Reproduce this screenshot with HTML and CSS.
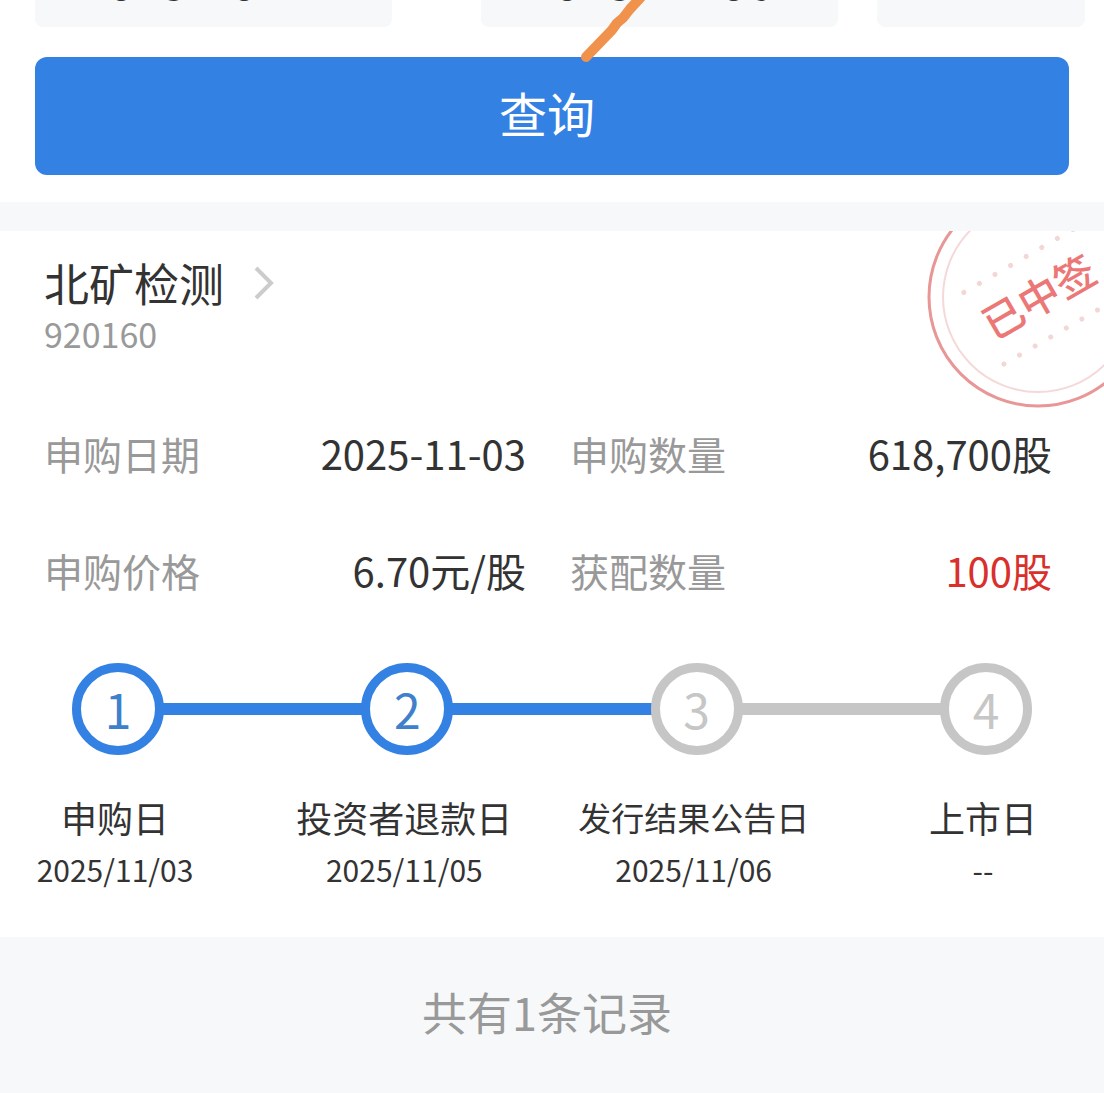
FILE: index.html
```
<!DOCTYPE html>
<html lang="zh-CN">
<head>
    <meta charset="utf-8" />
    <meta name="viewport" content="width=device-width, initial-scale=1" />
    <title>中签查询</title>
    <link rel="stylesheet" href="styles.css">
</head>
<body>

    <!-- 查询条件 -->
    <form class="query-form">
        <div class="query-fields">
            <input class="field" type="text" value="2025-10-12" aria-label="开始日期">
            <input class="field field-end" type="text" value="2025-11-06" aria-label="结束日期">
            <button class="field-more" type="button" aria-label="筛选"></button>
        </div>
        <button class="query-btn" type="button">查询</button>
        <svg class="pen-mark" width="80" height="64" viewBox="0 0 80 64" aria-hidden="true">
            <path d="M10 57 L36 30 L41 23 L47 18 L54 9 L65 -3" />
        </svg>
    </form>

    <!-- 申购记录 -->
    <section class="record-card">
        <svg class="stamp" width="222" height="222" viewBox="0 0 222 222">
            <circle class="stamp-outer" cx="111" cy="111" r="109" />
            <circle class="stamp-inner" cx="111" cy="111" r="95" />
            <g transform="rotate(-30 111 111)">
                <path class="stamp-dots" d="M49 70 H177" />
                <path class="stamp-dots" d="M48 152 H177" />
                <text class="stamp-text" x="112" y="127">已中签</text>
            </g>
        </svg>

        <a class="stock-link" href="#">
            <span class="stock-name">北矿检测</span>
            <svg class="arrow" width="20" height="36" viewBox="0 0 20 36" aria-hidden="true">
                <path d="M2 3 L17 18 L2 33" />
            </svg>
        </a>
        <div class="stock-code">920160</div>

        <dl class="info-grid">
            <div class="info-item">
                <dt>申购日期</dt>
                <dd>2025-11-03</dd>
            </div>
            <div class="info-item">
                <dt>申购数量</dt>
                <dd>618,700股</dd>
            </div>
            <div class="info-item">
                <dt>申购价格</dt>
                <dd>6.70元/股</dd>
            </div>
            <div class="info-item">
                <dt>获配数量</dt>
                <dd class="red">100股</dd>
            </div>
        </dl>

        <!-- 进度 -->
        <div class="steps">
            <div class="step done">
                <span class="step-num">1</span>
                <span class="step-name">申购日</span>
                <span class="step-date">2025/11/03</span>
            </div>
            <span class="step-line done"></span>
            <div class="step done">
                <span class="step-num">2</span>
                <span class="step-name">投资者退款日</span>
                <span class="step-date">2025/11/05</span>
            </div>
            <span class="step-line done"></span>
            <div class="step">
                <span class="step-num">3</span>
                <span class="step-name step-name-long">发行结果公告日</span>
                <span class="step-date">2025/11/06</span>
            </div>
            <span class="step-line"></span>
            <div class="step">
                <span class="step-num">4</span>
                <span class="step-name">上市日</span>
                <span class="step-date">--</span>
            </div>
        </div>
    </section>

    <footer class="total">共有1条记录</footer>

</body>
</html>
```
FILE: styles.css
```
* {
    box-sizing: border-box;
}

body {
    margin: 0;
    background-color: #f6f8fa;
    color: #333333;
    font-family: "Noto Sans CJK SC", sans-serif;
    overflow: hidden;
}

button, input {
    font-family: inherit;
    border: none;
}

/* 查询条件 */
.query-form {
    position: relative;
    margin-top: -67px;
    padding: 0 35px 27px;
    background-color: #ffffff;
}

.query-fields {
    display: flex;
    margin-right: -16px;
    margin-bottom: 30px;
}

.field, .field-more {
    height: 94px;
    border-radius: 8px;
    background-color: #f6f8fa;
}

.field {
    flex: 1;
    min-width: 0;
    padding: 0 0 2px 46px;
    font-size: 48px;
    color: #333333;
}

.field-end {
    margin: 0 39px 0 89px;
}

.field-more {
    width: 208px;
}

.query-btn {
    display: block;
    width: 100%;
    height: 118px;
    padding: 0 10px 8px 0;
    border-radius: 12px;
    background-color: #3381e3;
    color: #ffffff;
    font-size: 48px;
    cursor: pointer;
}

.pen-mark {
    position: absolute;
    top: 67px;
    left: calc(50% + 24px);
    fill: none;
    stroke: #f0924c;
    stroke-width: 10;
    stroke-linecap: round;
    stroke-linejoin: round;
}

/* 申购记录 */
.record-card {
    position: relative;
    margin-top: 29px;
    padding: 24px 0 42px;
    background-color: #ffffff;
    overflow: hidden;
}

.stamp {
    position: absolute;
    top: -45px;
    right: -45px;
    fill: none;
}

.stamp-outer {
    stroke: #e89696;
    stroke-width: 3;
}

.stamp-inner {
    stroke: #f5d9d9;
    stroke-width: 2;
}

.stamp-dots {
    stroke: #f3d6d6;
    stroke-width: 5;
    stroke-linecap: round;
    stroke-dasharray: 0 18;
}

.stamp-text {
    fill: #ec7777;
    font-size: 41px;
    font-weight: 500;
    text-anchor: middle;
}

.stock-link {
    display: flex;
    align-items: center;
    gap: 30px;
    width: fit-content;
    margin-left: 44px;
    color: #333333;
    text-decoration: none;
}

.stock-name {
    font-size: 45px;
    line-height: 56px;
}

.arrow {
    fill: none;
    stroke: #cccccc;
    stroke-width: 4;
}

.stock-code {
    margin-left: 44px;
    font-size: 34px;
    line-height: 46px;
    color: #999999;
}

.info-grid {
    display: grid;
    grid-template-columns: 1fr 1fr;
    column-gap: 44px;
    row-gap: 57px;
    margin: 66px 52px 63px 44px;
}

.info-item {
    display: flex;
    justify-content: space-between;
    align-items: center;
    line-height: 60px;
}

.info-item dt {
    font-size: 39px;
    color: #999999;
}

.info-item dd {
    margin: 0;
    font-size: 40px;
}

.info-item .red {
    color: #d9302c;
}

/* 进度 */
.steps {
    display: grid;
    grid-template-columns: 92px 1fr 92px 1fr 92px 1fr 92px;
    margin: 0 72px;
}

.step {
    display: flex;
    flex-direction: column;
    align-items: center;
    white-space: nowrap;
}

.step-num {
    width: 92px;
    height: 92px;
    border: 9px solid #c6c6c6;
    border-radius: 50%;
    color: #c6c6c6;
    font-size: 48px;
    line-height: 72px;
    text-align: center;
}

.step-line {
    height: 12px;
    margin: 40px -2px 0;
    background-color: #c6c6c6;
}

.step.done .step-num {
    border-color: #3381e3;
    color: #3e80cc;
}

.step-line.done {
    background-color: #3381e3;
}

.step-name {
    margin-top: 36px;
    padding-right: 6px;
    font-size: 36px;
    line-height: 52px;
}

.step-name-long {
    font-size: 33px;
}

.step-date {
    padding-right: 6px;
    font-size: 30px;
    line-height: 52px;
}

.total {
    padding: 41px 10px 44px 0;
    color: #999999;
    font-size: 45px;
    line-height: 68px;
    text-align: center;
}
```
